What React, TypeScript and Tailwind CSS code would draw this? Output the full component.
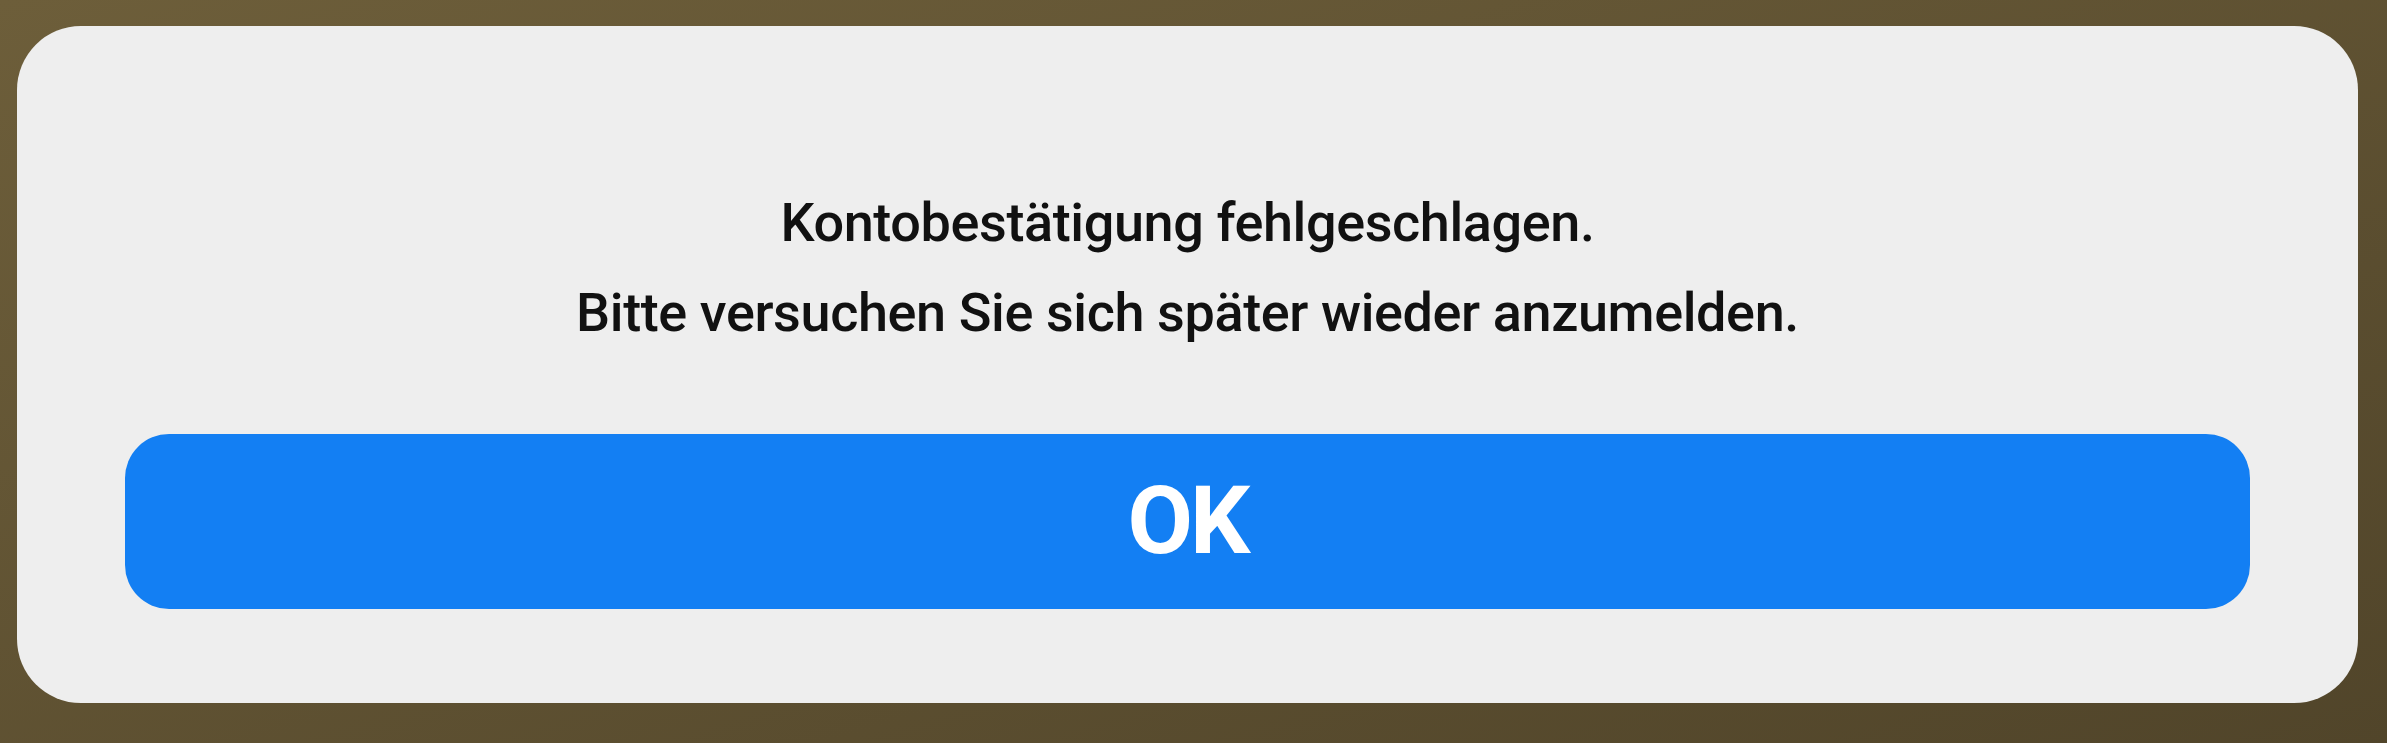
export default function App() {
  return (
    <div className="w-full h-[743px] bg-gradient-to-br from-[#6d5e3a] to-[#51452a] pt-[26px] pl-[17px] pr-[29px] pb-[40px]">
      <div className="h-full rounded-[64px] bg-[#eeeeee] flex flex-col px-[108px] pt-[152px] font-['Roboto','DejaVu_Sans_Condensed',sans-serif]">
        <div className="text-center text-[#111111] text-[54px] font-medium tracking-[-0.4px] leading-[90px]">
          <p>Kontobestätigung fehlgeschlagen.</p>
          <p>Bitte versuchen Sie sich später wieder anzumelden.</p>
        </div>
        <button className="mt-[76px] h-[175px] w-full rounded-[44px] bg-[#137ff3] text-white text-[95px] font-bold tracking-[-3px] flex items-center justify-center">
          OK
        </button>
      </div>
    </div>
  )
}
